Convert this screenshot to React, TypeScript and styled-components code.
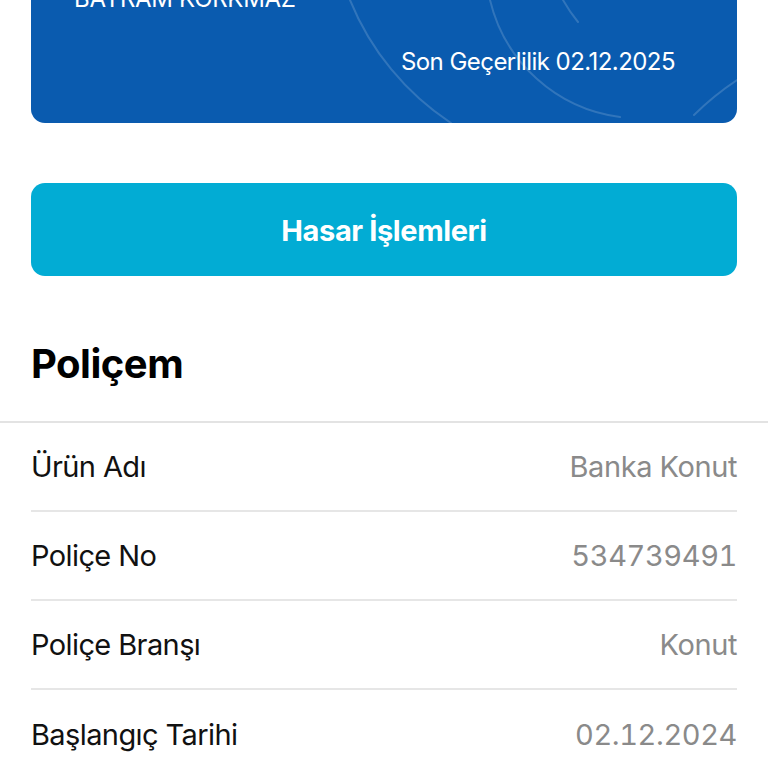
import React from "react";
import styled, { createGlobalStyle } from "styled-components";

const Global = createGlobalStyle`
  html, body { margin: 0; padding: 0; background: #ffffff; }
  body { font-family: Inter, "Noto Sans", sans-serif; -webkit-font-smoothing: antialiased; }
  * { box-sizing: border-box; }
`;

const Page = styled.div`
  width: 768px;
  height: 768px;
  overflow: hidden;
  background: #fff;
  display: flex;
  flex-direction: column;
`;

const Top = styled.div`
  padding: 0 31px;
  display: flex;
  flex-direction: column;
`;

const Card = styled.div`
  position: relative;
  margin-top: -80px;
  background: #0a5baf;
  border-radius: 0 0 14px 14px;
  padding: 64px 62px 46px 43px;
  display: flex;
  flex-direction: column;
  gap: 33px;
  overflow: hidden;
  color: #fff;
`;

const Arcs = styled.svg`
  position: absolute;
  left: 0;
  top: 0;
  width: 706px;
  height: 203px;
  pointer-events: none;
`;

const Holder = styled.div`
  position: relative;
  font-size: 24px;
  line-height: 30px;
  letter-spacing: -0.3px;
  text-transform: uppercase;
`;

const Expiry = styled.div`
  position: relative;
  align-self: flex-end;
  font-size: 24px;
  line-height: 30px;
  letter-spacing: -0.55px;
`;

const ActionButton = styled.button`
  margin-top: 60px;
  height: 93px;
  border: none;
  border-radius: 14px;
  background: #02acd4;
  color: #fff;
  font-family: inherit;
  font-size: 29px;
  font-weight: 700;
  letter-spacing: -0.4px;
  padding-top: 3px;
`;

const Heading = styled.h2`
  margin: 66px 0 35px;
  font-size: 40px;
  line-height: 44px;
  font-weight: 700;
  letter-spacing: -0.5px;
  color: #000;
`;

const List = styled.div`
  border-top: 2px solid #e3e3e3;
  padding: 0 31px;
`;

const Row = styled.div`
  height: 89px;
  display: flex;
  align-items: center;
  justify-content: space-between;
  border-bottom: 2px solid #e6e6e6;
  &:last-child { border-bottom: none; }
`;

const Label = styled.span`
  font-size: 29px;
  letter-spacing: -0.6px;
  color: #111;
`;

const Value = styled.span`
  font-size: 29px;
  letter-spacing: -0.4px;
  font-feature-settings: "tnum" 1;
  color: #8a8a8a;
`;

const rows = [
  ["Ürün Adı", "Banka Konut"],
  ["Poliçe No", "534739491"],
  ["Poliçe Branşı", "Konut"],
  ["Başlangıç Tarihi", "02.12.2024"],
];

export default function App() {
  return (
    <>
      <Global />
      <Page>
        <Top>
          <Card>
            <Arcs viewBox="0 0 706 203">
              <g fill="none" stroke="rgba(255,255,255,0.16)" strokeWidth="2" strokeLinecap="round">
                <path d="M 319 80 A 268 268 0 0 0 420 203" />
                <path d="M 459 80 A 154 154 0 0 0 589 197" />
                <path d="M 532 80 A 159 159 0 0 0 547 102" />
                <path d="M 706 160 A 277 277 0 0 0 663 195" />
              </g>
            </Arcs>
            <Holder>Bayram Korkmaz</Holder>
            <Expiry>Son Geçerlilik 02.12.2025</Expiry>
          </Card>
          <ActionButton>Hasar İşlemleri</ActionButton>
          <Heading>Poliçem</Heading>
        </Top>
        <List>
          {rows.map(([l, v]) => (
            <Row key={l}>
              <Label>{l}</Label>
              <Value>{v}</Value>
            </Row>
          ))}
        </List>
      </Page>
    </>
  );
}
